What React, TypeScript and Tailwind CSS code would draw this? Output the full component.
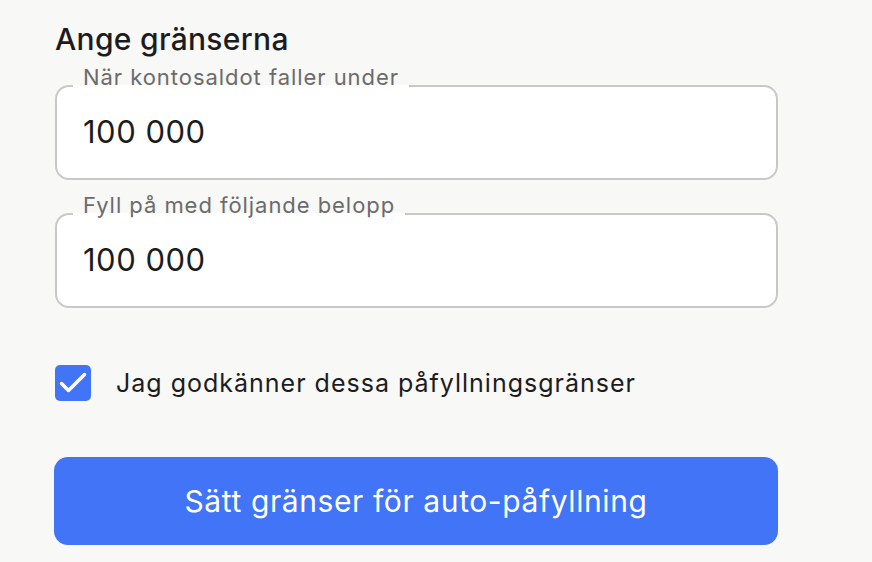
import { useState } from 'react'

export default function App() {
  const [threshold, setThreshold] = useState('100 000')
  const [amount, setAmount] = useState('100 000')
  const [agreed, setAgreed] = useState(true)

  return (
    <div className="min-h-[562px] bg-[#f8f8f6] font-['Inter',sans-serif] text-[#1c1c1e]">
      <div className="w-[778px] pl-[55px] pt-[21px]">
        <h2 className="text-[30px] leading-[36px] font-medium tracking-[0.3px]">Ange gränserna</h2>

        {/* Limit fields */}
        <fieldset className="mt-[19px] rounded-[14px] border-2 border-[#c8c8c8] bg-white pl-[26px] pr-4">
          <legend className="-ml-[10px] px-[10px] text-[22px] leading-[20px] tracking-[0.95px] text-[#6b6b6b] -translate-y-[9px]">
            När kontosaldot faller under
          </legend>
          <input
            className="block h-[82px] w-full pb-[11px] text-[31px] tracking-[0.5px] outline-none bg-transparent"
            value={threshold}
            onChange={(e) => setThreshold(e.target.value)}
          />
        </fieldset>

        <fieldset className="mt-[24px] rounded-[14px] border-2 border-[#c8c8c8] bg-white pl-[26px] pr-4">
          <legend className="-ml-[10px] px-[10px] text-[22px] leading-[20px] tracking-[0.95px] text-[#6b6b6b] -translate-y-[9px]">
            Fyll på med följande belopp
          </legend>
          <input
            className="block h-[82px] w-full pb-[11px] text-[31px] tracking-[0.5px] outline-none bg-transparent"
            value={amount}
            onChange={(e) => setAmount(e.target.value)}
          />
        </fieldset>

        {/* Consent */}
        <label className="mt-[57px] flex items-center gap-[25px] cursor-pointer select-none">
          <span
            className={`flex h-[36px] w-[36px] items-center justify-center rounded-[5px] ${agreed ? 'bg-[#4174f6]' : 'border-2 border-[#c8c8c8] bg-white'}`}
          >
            {agreed && (
              <svg width="36" height="36" viewBox="0 0 36 36" fill="none" stroke="white" strokeWidth="3.5" strokeLinecap="round" strokeLinejoin="round">
                <polyline points="6.5 18.5 13.5 25.5 29.5 9.5" />
              </svg>
            )}
          </span>
          <input type="checkbox" className="hidden" checked={agreed} onChange={(e) => setAgreed(e.target.checked)} />
          <span className="text-[25px] leading-[36px] tracking-[1px]">Jag godkänner dessa påfyllningsgränser</span>
        </label>

        <button
          className="mt-[56px] -ml-px h-[88px] w-[724px] rounded-[14px] bg-[#4174f6] text-[30px] tracking-[0.6px] text-white"
          disabled={!agreed}
        >
          Sätt gränser för auto-påfyllning
        </button>
      </div>
    </div>
  )
}
